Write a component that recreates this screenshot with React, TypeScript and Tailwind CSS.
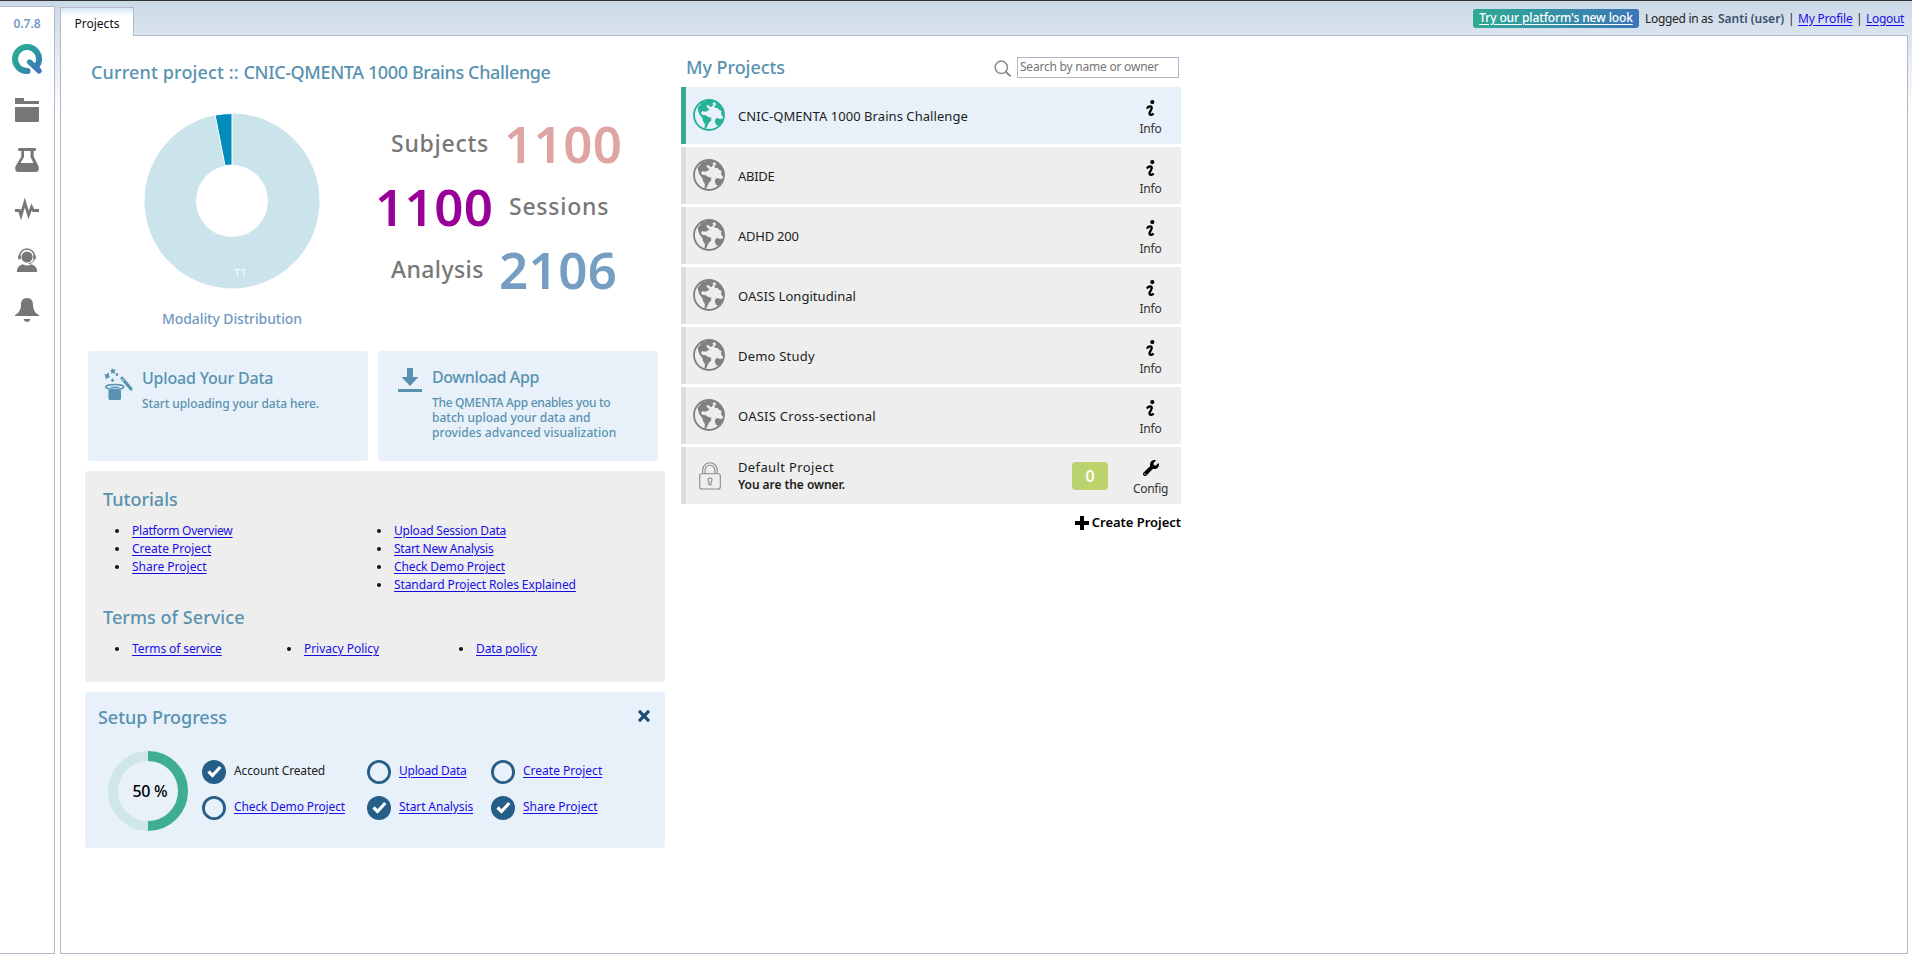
import React from 'react';
import { FaWrench } from 'react-icons/fa';
import { ImCross } from 'react-icons/im';

function Logo() {
  return (
    <svg width="30" height="30" viewBox="0 0 30 30" fill="none">
      <defs>
        <linearGradient id="logo" x1="3" y1="5" x2="28" y2="28" gradientUnits="userSpaceOnUse">
          <stop offset="0.1" stopColor="#2bab93" />
          <stop offset="0.6" stopColor="#2f8fa5" />
          <stop offset="1" stopColor="#4271be" />
        </linearGradient>
      </defs>
      <path d="M15.5 27 H15 A12 12 0 1 1 26.9 16.5 Q26.6 19.5 25 22" stroke="url(#logo)" strokeWidth="6" strokeLinecap="round" />
      <path d="M17.6 18 L27 26.8" stroke="url(#logo)" strokeWidth="5.4" strokeLinecap="round" />
    </svg>
  );
}

function FolderIcon() {
  return (
    <svg width="24" height="24" viewBox="0 0 24 24" fill="#777">
      <path d="M0 0H9V3H24V6H0Z M0 9H24V23Q24 24 23 24H1Q0 24 0 23Z" />
    </svg>
  );
}

function FlaskIcon() {
  return (
    <svg width="24" height="24" viewBox="0 0 24 24" fill="#777">
      <path
        fillRule="evenodd"
        d="M4 0H20Q21 0 21 1.5T20 3H18.7V8.5L23.6 18.5Q24.6 24 20.5 24H3.5Q-0.6 24 0.4 18.5L6.3 8.5V3H4Q3 3 3 1.5T4 0Z M9 3V9L5.5 15H18.5L15.5 9V3Z"
      />
    </svg>
  );
}

function PulseIcon() {
  return (
    <svg width="24" height="24" viewBox="0 0 24 24" fill="none" stroke="#777" strokeWidth="2.8">
      <path d="M0 12.5H4.4L6 17.5L9.8 4.5L13.6 17L16.6 9L18.4 12.5H24" strokeMiterlimit="6" />
    </svg>
  );
}

function SupportIcon() {
  return (
    <svg width="24" height="24" viewBox="0 0 24 24" fill="#777">
      <circle cx="12" cy="9" r="5.6" />
      <path d="M4.4 9A7.6 8 0 0 1 19.6 9" fill="none" stroke="#777" strokeWidth="1.5" />
      <rect x="3.2" y="7.2" width="2.6" height="4.2" rx="1" />
      <rect x="18.2" y="7.2" width="2.6" height="4.2" rx="1" />
      <path d="M19.2 11Q18.5 15.2 13.5 15.6" fill="none" stroke="#777" strokeWidth="1" />
      <path d="M1.8 24Q2 17.5 8 16.3Q12 18.8 16 16.3Q22 17.5 22.2 24Z" />
    </svg>
  );
}

function BellIcon() {
  return (
    <svg width="24" height="24" viewBox="0 0 24 24" fill="#777">
      <path d="M12 0C16.3 0 18 3 18 6.5C18 12 20.5 15.5 24 17V18H0V17C3.5 15.5 6 12 6 6.5C6 3 7.7 0 12 0Z" />
      <path d="M8.6 21H15.4Q14.5 24 12 24T8.6 21Z" />
    </svg>
  );
}

function GlobeIcon({ className }: { className: string }) {
  return (
    <svg width="32" height="32" viewBox="0 0 96 96" className={className} fill="currentColor">
      <circle cx="48" cy="48" r="45" fill="none" stroke="currentColor" strokeWidth="5.5" />
      <path d="M14 26L28 10L44 5L60 6L66 10L58 12L61 18L55 24L49 22L46 17L40 20L44 27L50 31L43 36L36 38L28 36L24 42L28 47L38 49L46 54L55 56L54 65L47 72L43 82L38 90L34 89L36 76L30 66L28 57L19 46L16 36Z" />
      <path d="M66 10L80 16L90 32L94 50L88 52L84 44L86 36L79 33L74 27L67 27L63 20L70 19Z" />
      <path d="M66 62L72 57L82 60L88 58L90 64L82 76L76 80L70 78L66 70Z" />
    </svg>
  );
}

function InfoIcon() {
  return (
    <svg width="10" height="17" viewBox="0 0 10 17" fill="none" stroke="#000">
      <circle cx="6.3" cy="2.1" r="2.1" fill="#000" stroke="none" />
      <path d="M1 8.6C2.2 6 6 5.4 5.7 8.2C5.5 10 3.4 12 3.5 13.6C3.7 15.6 6.3 15 7.6 13.4" strokeWidth="2.3" />
    </svg>
  );
}

function LockIcon() {
  return (
    <svg width="22" height="28" viewBox="0 0 22 28" fill="none" stroke="#8a8a8a" strokeWidth="1.1">
      <rect x="0.7" y="11.7" width="20.6" height="15.3" rx="2" />
      <path d="M3.7 11.5V8A7.3 7.3 0 0 1 18.3 8V11.5M6.1 11.5V8.2A4.9 4.9 0 0 1 15.9 8.2V11.5" />
      <path d="M9.9 19.7A2 2 0 1 1 12.1 19.7V22.7H9.9Z" />
    </svg>
  );
}

function SearchIcon() {
  return (
    <svg width="18" height="18" viewBox="0 0 18 18" fill="none" stroke="#8c8c8c">
      <circle cx="7.3" cy="7.3" r="6.2" strokeWidth="1.5" />
      <path d="M11.8 11.8L16.6 16.4" strokeWidth="2" />
    </svg>
  );
}

function HatIcon() {
  return (
    <svg width="32" height="34" viewBox="0 0 32 34" fill="#5892b0">
      <path d="M4.5 22H17V30.5Q17 32 15 32H6.500Q4.5 32 4.5 30.5Z" />
      <ellipse cx="10.8" cy="19" rx="9" ry="2.4" fill="#e8f1f9" stroke="#5892b0" strokeWidth="1.5" />
      <ellipse cx="10.8" cy="19.3" rx="5" ry="0.8" />
      <path d="M18 10.3L27 21" stroke="#5892b0" strokeWidth="3.2" strokeLinecap="round" />
      <path d="M18.2 10.9L20 13" stroke="#e8f1f9" strokeWidth="0.9" />
      <path d="M7.5 0L9.5 1.5L11.4 1.3L10.6 3.4L11.2 5.6L9 4.9L7 5.8L7.3 3.6L6 2L7.7 1.9Z" />
      <path d="M0.4 6.2L2.6 6.2L5 4.6L5 7.4L6 9.6L3.8 9.7L1.8 11.4L1.5 8.8Z" />
      <path d="M11.8 5.3L14.2 5.6L13.8 7.9L11.5 7.6Z" />
      <path d="M8.5 10.6V14M6.8 12.3H10.2" stroke="#5892b0" strokeWidth="1.2" />
    </svg>
  );
}

function DownloadIcon() {
  return (
    <svg width="24" height="24" viewBox="0 0 24 24" fill="#5892b0">
      <path d="M9 0H15V9H20.5L12 18L3.5 9H9Z M0 21H24V24H0Z" />
    </svg>
  );
}

function ModalityChart() {
  return (
    <svg width="180" height="180" viewBox="-90 -90 180 180">
      <circle r="61.7" fill="none" stroke="#cbe3ea" strokeWidth="51.6" />
      <path d="M0 -87.5A87.5 87.5 0 0 0 -16.9 -85.9L-7 -35.4A36 36 0 0 1 0 -36Z" fill="#028cbc" stroke="#fff" strokeWidth="1" />
      <text x="8.5" y="76" textAnchor="middle" fontSize="11" fill="#fff" fontFamily="Noto Sans">
        T1
      </text>
    </svg>
  );
}

function ProgressRing() {
  return (
    <div className="relative flex size-20 items-center justify-center">
      <svg width="80" height="80" viewBox="-40 -40 80 80" fill="none" strokeWidth="10" className="absolute inset-0">
        <circle r="35" stroke="#cfe6ea" />
        <path d="M0 -35A35 35 0 0 1 0 35" stroke="#3fad93" />
      </svg>
      <span className="relative pl-1 text-base font-medium tracking-[-0.28px] text-black">50 %</span>
    </div>
  );
}

function Check({ done }: { done: boolean }) {
  return (
    <svg width="24" height="24" viewBox="0 0 24 24" fill="none">
      {done ? (
        <>
          <circle cx="12" cy="12" r="12" fill="#255e88" />
          <path d="M6.5 11.5L10.5 15.5L18.3 7" stroke="#fff" strokeWidth="3.2" />
        </>
      ) : (
        <circle cx="12" cy="12" r="10.6" stroke="#255e88" strokeWidth="2.8" />
      )}
    </svg>
  );
}

function Bullets({ items, className = '' }: { items: [string, string][]; className?: string }) {
  return (
    <ul className={className}>
      {items.map(([label, tracking]) => (
        <li key={label} className="flex h-[18px] items-center gap-[13px]">
          <span className="ml-px size-1 rounded-full bg-[#111]" />
          <a className={`text-[#1a0fe8] underline decoration-[#1208e0] underline-offset-[2px] ${tracking}`}>{label}</a>
        </li>
      ))}
    </ul>
  );
}

const steps: { label: string; done: boolean; link: boolean; tracking: string }[] = [
  { label: 'Account Created', done: true, link: false, tracking: 'tracking-[-0.13px]' },
  { label: 'Upload Data', done: false, link: true, tracking: 'tracking-[-0.25px]' },
  { label: 'Create Project', done: false, link: true, tracking: '' },
  { label: 'Check Demo Project', done: false, link: true, tracking: 'tracking-[-0.13px]' },
  { label: 'Start Analysis', done: true, link: true, tracking: 'tracking-[-0.12px]' },
  { label: 'Share Project', done: true, link: true, tracking: '' },
];

const projects: [string, string][] = [
  ['CNIC-QMENTA 1000 Brains Challenge', 'tracking-[0.06px]'],
  ['ABIDE', 'tracking-[-0.3px]'],
  ['ADHD 200', 'tracking-[-0.25px]'],
  ['OASIS Longitudinal', 'tracking-[0.05px]'],
  ['Demo Study', 'tracking-[0.2px]'],
  ['OASIS Cross-sectional', 'tracking-[0.26px]'],
];

function Sidebar() {
  return (
    <aside className="mt-[5px] flex h-[948px] w-[55px] flex-none flex-col items-center border-y border-r border-[#b3b9c9] bg-white">
      <span className="mt-[7px] text-xs leading-5 font-semibold text-[#6f9bc5]">0.7.8</span>
      <div className="mt-[10px]"><Logo /></div>
      <div className="mt-6 flex flex-col gap-[26px]">
        <FolderIcon />
        <FlaskIcon />
        <PulseIcon />
        <SupportIcon />
        <BellIcon />
      </div>
    </aside>
  );
}

function TopBar() {
  return (
    <header className="flex h-[34px] items-end justify-between">
      <div className="relative -mb-px h-[29px] w-[74px] border border-b-0 border-[#b3b9c9] bg-linear-to-b from-[#d8e7f7] to-white to-[8px] text-center leading-[32px] text-[#111]">
        Projects
      </div>
      <div className="mr-px mb-[7px] flex h-[19px] items-center text-[#222]">
        <a className="mr-[6px] h-[19px] w-[166px] rounded-[3px] bg-linear-to-r from-[#2eaa91] to-[#3d74b8] text-center leading-[18px] font-medium tracking-[-0.12px] whitespace-nowrap text-white underline underline-offset-2">
          Try our platform's new look
        </a>
        <span className="w-[73px] tracking-[-0.31px] whitespace-nowrap">Logged in as</span>
        <span className="w-[70px] font-semibold text-[#3c5068]">Santi (user)</span>
        <span className="w-[10px]">|</span>
        <a className="w-[58px] tracking-[-0.2px] text-[#1a0fe8] underline underline-offset-2">My Profile</a>
        <span className="w-[10px]">|</span>
        <a className="w-[41px] tracking-[-0.32px] text-[#1a0fe8] underline underline-offset-2">Logout</a>
      </div>
    </header>
  );
}

function Stats() {
  const label = 'mt-[11px] text-[23px] leading-10 font-medium text-[#777]';
  const value = 'text-[51px] leading-[63px] font-semibold tracking-[0.4px]';
  return (
    <div className="ml-[53px] flex flex-col pt-7">
      <div className="flex h-[63px] items-start pl-4">
        <span className={`${label} w-[113px] tracking-[0.75px]`}>Subjects</span>
        <span className={`${value} text-[#dfa4a4]`}>1100</span>
      </div>
      <div className="flex h-[63px] items-start">
        <span className={`${value} w-[134px] text-[#990099]`}>1100</span>
        <span className={`${label} tracking-[0.75px]`}>Sessions</span>
      </div>
      <div className="flex h-[63px] items-start pl-4">
        <span className={`${label} w-[108px] tracking-[0.4px]`}>Analysis</span>
        <span className={`${value} text-[#769dc2]`}>2106</span>
      </div>
    </div>
  );
}

function Actions() {
  return (
    <div className="flex gap-[10px] px-[3px] font-medium text-[#5892b0]">
      <div className="flex h-[110px] w-[280px] items-start rounded-[3px] bg-[#e8f1f9] pl-4">
        <div className="mt-[17px] w-[38px]"><HatIcon /></div>
        <div className="pt-[15px]">
          <h3 className="text-base leading-6 tracking-[-0.2px]">Upload Your Data</h3>
          <p className="mt-[5px] leading-[18px] tracking-[-0.09px]">Start uploading your data here.</p>
        </div>
      </div>
      <div className="flex h-[110px] w-[280px] items-start rounded-[3px] bg-[#e8f1f9] pl-5">
        <div className="mt-[17px] w-[34px]"><DownloadIcon /></div>
        <div className="pt-[14px]">
          <h3 className="text-base leading-6 tracking-[-0.4px]">Download App</h3>
          <p className="mt-[6px] leading-[15px]">
            <span className="tracking-[-0.32px]">The QMENTA App enables you to</span>
            <br />
            batch upload your data and
            <br />
            <span className="tracking-[0.07px]">provides advanced visualization</span>
          </p>
        </div>
      </div>
    </div>
  );
}

function Resources() {
  return (
    <section className="mt-[10px] h-[211px] rounded-[3px] bg-[#eee] px-[18px] pt-4">
      <h2 className="text-lg leading-6 font-medium text-[#5892b0]">Tutorials</h2>
      <div className="mt-[11px] flex pl-[11px]">
        <Bullets
          className="h-[72px] w-[262px]"
          items={[
            ['Platform Overview', 'tracking-[-0.23px]'],
            ['Create Project', ''],
            ['Share Project', ''],
          ]}
        />
        <Bullets
          items={[
            ['Upload Session Data', 'tracking-[-0.21px]'],
            ['Start New Analysis', 'tracking-[-0.25px]'],
            ['Check Demo Project', 'tracking-[-0.13px]'],
            ['Standard Project Roles Explained', 'tracking-[-0.1px]'],
          ]}
        />
      </div>
      <h2 className="mt-[11px] text-lg leading-6 font-medium tracking-[0.05px] text-[#5892b0]">Terms of Service</h2>
      <div className="mt-[11px] flex pl-[11px]">
        <Bullets className="w-[172px]" items={[['Terms of service', 'tracking-[-0.1px]']]} />
        <Bullets className="w-[172px]" items={[['Privacy Policy', 'tracking-[-0.05px]']]} />
        <Bullets items={[['Data policy', 'tracking-[-0.13px]']]} />
      </div>
    </section>
  );
}

function Setup() {
  return (
    <section className="mt-[10px] h-[156px] rounded-[3px] bg-[#e8f1f9] pt-[13px]">
      <div className="flex items-start justify-between pr-[15px] pl-[13px]">
        <h2 className="text-lg leading-6 font-medium tracking-[-0.05px] text-[#5892b0]">Setup Progress</h2>
        <ImCross size={12} className="mt-[5px] text-[#1f4e72]" />
      </div>
      <div className="mt-[22px] flex pl-[23px]">
        <ProgressRing />
        <div className="mt-[9px] ml-[14px] grid h-[60px] grid-cols-[165px_124px_120px] content-between">
          {steps.map((s) => (
            <div key={s.label} className="flex h-6 items-center gap-2">
              <Check done={s.done} />
              <span
                className={`-mt-[3px] whitespace-nowrap ${s.tracking} ${s.link ? 'text-[#1a0fe8] underline underline-offset-2' : 'text-[#222]'}`}
              >
                {s.label}
              </span>
            </div>
          ))}
        </div>
      </div>
    </section>
  );
}

function Projects() {
  return (
    <section className="w-[500px] pt-[19px]">
      <div className="flex h-8 items-start pl-[5px]">
        <h2 className="w-[308px] text-lg leading-6 font-medium tracking-[-0.06px] text-[#5892b0]">My Projects</h2>
        <div className="mt-[5px] w-[23px]"><SearchIcon /></div>
        <input
          placeholder="Search by name or owner"
          className="mt-[2px] h-[21px] w-[162px] border border-[#b3b3c6] bg-white px-[2px] pb-[2px] text-xs tracking-[-0.22px] placeholder:text-[#757575]"
        />
      </div>
      <div className="flex flex-col gap-[3px] text-[13px] text-[#1c1c1c]">
        {projects.map(([name, tracking], i) => (
          <div
            key={name}
            className={`flex h-[57px] items-start border-l-[5px] ${i === 0 ? 'border-[#3aaa8f] bg-[#e8f1f9]' : 'border-[#dcdcdc] bg-[#eee]'}`}
          >
            <div className="mt-3 ml-[7px] w-[45px]">
              <GlobeIcon className={i === 0 ? 'text-[#26b298]' : 'text-[#808080]'} />
            </div>
            <span className={`mt-[19px] flex-1 leading-5 ${tracking}`}>{name}</span>
            <div className="mr-[5px] flex w-[50px] flex-col items-center pt-[13px]">
              <InfoIcon />
              <span className="mt-[3px] pr-px text-xs leading-[18px] tracking-[-0.22px] text-[#333]">Info</span>
            </div>
          </div>
        ))}
        <div className="flex h-[57px] items-start border-l-[5px] border-[#dcdcdc] bg-[#eee]">
          <div className="mt-[15px] ml-[13px] w-[39px]"><LockIcon /></div>
          <div className="mt-[11px] flex-1 leading-[18px]">
            <div className="tracking-[0.37px]">Default Project</div>
            <div className="text-xs leading-[18px] font-semibold tracking-[-0.06px]">You are the owner.</div>
          </div>
          <div className="mt-[15px] h-7 w-9 rounded-[4px] bg-[#bbd36c] text-center text-base leading-7 font-semibold text-white">0</div>
          <div className="mr-[5px] ml-[18px] flex w-[50px] flex-col items-center pt-[13px]">
            <FaWrench size={16} className="text-black" />
            <span className="mt-1 pr-px text-xs leading-[18px] tracking-[-0.31px] text-[#333]">Config</span>
          </div>
        </div>
      </div>
      <div className="mt-2 flex items-center justify-end gap-[3px] text-[13px] leading-5 font-semibold tracking-[-0.03px] text-black">
        <svg width="14" height="14" viewBox="0 0 14 14" className="mt-[2px]">
          <path d="M5 0H9V5H14V9H9V14H5V9H0V5H5Z" />
        </svg>
        Create Project
      </div>
    </section>
  );
}

export default function App() {
  return (
    <div className="flex h-[958px] w-full overflow-hidden border-t border-[#333] bg-linear-to-b from-[#cbd9e7] to-white to-[115px] font-['Noto_Sans','Open_Sans',sans-serif] text-xs">
      <Sidebar />
      <div className="mr-1 ml-[5px] flex flex-1 flex-col">
        <TopBar />
        <main className="flex h-[919px] gap-4 border border-[#b3b9c9] bg-white pl-6">
          <div className="w-[580px] pt-6">
            <h1 className="pl-[6px] text-lg leading-6 font-medium tracking-[-0.38px] whitespace-nowrap text-[#5892b0]">
              <span className="tracking-[0.12px]">Current project :: </span>
              CNIC-QMENTA 1000 Brains Challenge
            </h1>
            <div className="flex h-[267px]">
              <div className="ml-[57px] flex w-[180px] flex-col items-center pt-[27px]">
                <ModalityChart />
                <span className="mt-[18px] text-sm leading-5 font-medium tracking-[-0.09px] text-[#7099c2]">Modality Distribution</span>
              </div>
              <Stats />
            </div>
            <Actions />
            <Resources />
            <Setup />
          </div>
          <Projects />
        </main>
      </div>
    </div>
  );
}
